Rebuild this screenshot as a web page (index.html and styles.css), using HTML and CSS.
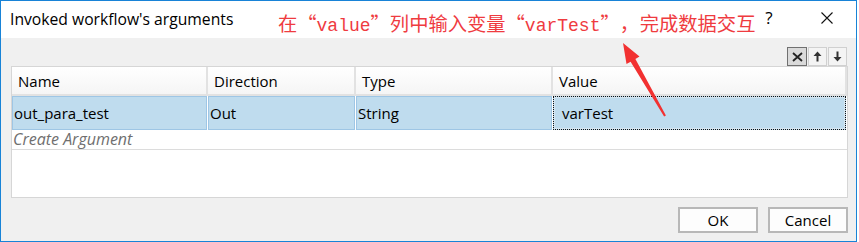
FILE: index.html
```html
<!DOCTYPE html>
<html lang="zh-CN">
<head>
    <meta charset="UTF-8">
    <title>Invoked workflow's arguments</title>
    <link rel="stylesheet" href="styles.css">
</head>
<body>
    <div class="window">
        <div class="titlebar">
            <span class="title">Invoked workflow's arguments</span>
            <span class="note">在“<span class="mono">value</span>”列中输入变量“<span class="mono">varTest</span>”<span class="fw">，</span>完成数据交互</span>
            <span class="help">?</span>
            <span class="close">
                <svg width="12" height="12" viewBox="0 0 12 12"><path d="M0.5 0.5L11.5 11.5M11.5 0.5L0.5 11.5" stroke="#111" stroke-width="1.1" fill="none"/></svg>
            </span>
        </div>

        <div class="content">
            <div class="toolbar">
                <span class="tool active">
                    <svg width="11" height="10" viewBox="0 0 11 10"><path d="M1 1L10 9M10 1L1 9" stroke="#222" stroke-width="1.8" fill="none"/></svg>
                </span>
                <span class="tool">
                    <svg width="9" height="11" viewBox="0 0 9 11"><path d="M4.5 0.5L8.5 5H5.5V10.5H3.5V5H0.5Z" fill="#333"/></svg>
                </span>
                <span class="tool">
                    <svg width="9" height="11" viewBox="0 0 9 11"><path d="M4.5 10.5L8.5 6H5.5V0.5H3.5V6H0.5Z" fill="#333"/></svg>
                </span>
            </div>

            <div class="grid">
                <div class="row head">
                    <div class="cell">Name</div>
                    <div class="cell">Direction</div>
                    <div class="cell">Type</div>
                    <div class="cell">Value</div>
                </div>
                <div class="row data">
                    <div class="cell">out_para_test</div>
                    <div class="cell">Out</div>
                    <div class="cell">String</div>
                    <div class="cell focus">varTest</div>
                </div>
                <div class="create">Create Argument</div>
            </div>

            <div class="actions">
                <button class="btn">OK</button>
                <button class="btn">Cancel</button>
            </div>
        </div>

        <!-- 标注箭头 -->
        <svg class="arrow" width="859" height="242" viewBox="0 0 859 242">
            <polygon points="623,43 639.5,56.5 635.4,59 665.9,115.5 664.1,116.5 630.6,61.8 626.5,64" fill="#f23131"/>
        </svg>
    </div>
</body>
</html>
```

FILE: styles.css
```css
body { margin: 0; font-family: 'Open Sans', 'Noto Sans', Arial, sans-serif; font-size: 15px; color: #000; background: #fff; }
.window { position: relative; width: 857px; height: 242px; box-sizing: border-box; border: 1px solid #1883d7; display: flex; flex-direction: column; background: #fff; }

.titlebar { height: 37px; flex: 0 0 37px; display: flex; align-items: center; padding-left: 9px; }
.title { flex: 0 0 268px; margin-top: -2px; font-size: 15.7px; }
.note { color: #ef3b3f; font-family: 'Noto Sans CJK SC', sans-serif; font-size: 19.3px; margin-top: 6px; white-space: nowrap; text-spacing-trim: space-all; font-feature-settings: "halt" 0, "chws" 0; }
.note .mono { font-family: 'Liberation Mono', monospace; font-size: 18px; }
.note .fw { display: inline-block; width: 20px; }
.help { margin-left: auto; width: 12px; text-align: center; font-size: 17px; margin-right: 40px; margin-top: -4px; }
.close { width: 24px; margin-right: 17px; display: flex; justify-content: center; margin-top: -3px; }

.content { flex: 1; background: #f0f0f0; padding: 9px 8px 6px 10px; display: flex; flex-direction: column; }
.toolbar { display: flex; justify-content: flex-end; height: 19px; margin-right: 1px; }
.tool { width: 17px; height: 17px; border: 1px solid #d0d0d0; background: #f4f4f4; display: flex; align-items: center; justify-content: center; margin-left: 1px; }
.tool.active { width: 18px; border-color: #707070; background: #dadada; }

.grid { height: 132px; box-sizing: border-box; border: 1px solid #d6d6d6; background: #fff; }
.row { display: grid; grid-template-columns: 196px 148px 197px 1fr; }
.head .cell { height: 27px; line-height: 28px; padding-left: 6px; background: linear-gradient(#fff, #f5f5f5); border-right: 2px solid #e2e2e2; border-bottom: 2px solid #e2e2e2; }
.data .cell { height: 32px; line-height: 32px; padding-left: 1px; background: #bfdcee; border: 1px solid #9ec6e5; margin-right: 1px; }
.data .focus { border: 1px dotted #111; padding-left: 8px; box-shadow: inset 0 0 0 1px #d6e6f1; }
.create { height: 19px; line-height: 19px; padding-left: 1px; font-style: italic; font-size: 16px; color: #6f6f6f; border-bottom: 1px solid #dcdcdc; }

.actions { display: flex; justify-content: flex-end; gap: 10px; margin-top: 9px; }
.btn { width: 80px; height: 26px; box-sizing: border-box; border: 2px solid #b8b8b8; background: #fdfdfd; font-family: inherit; font-size: 15px; color: #000; padding: 0; }

.arrow { position: absolute; left: -1px; top: -1px; pointer-events: none; }
```
